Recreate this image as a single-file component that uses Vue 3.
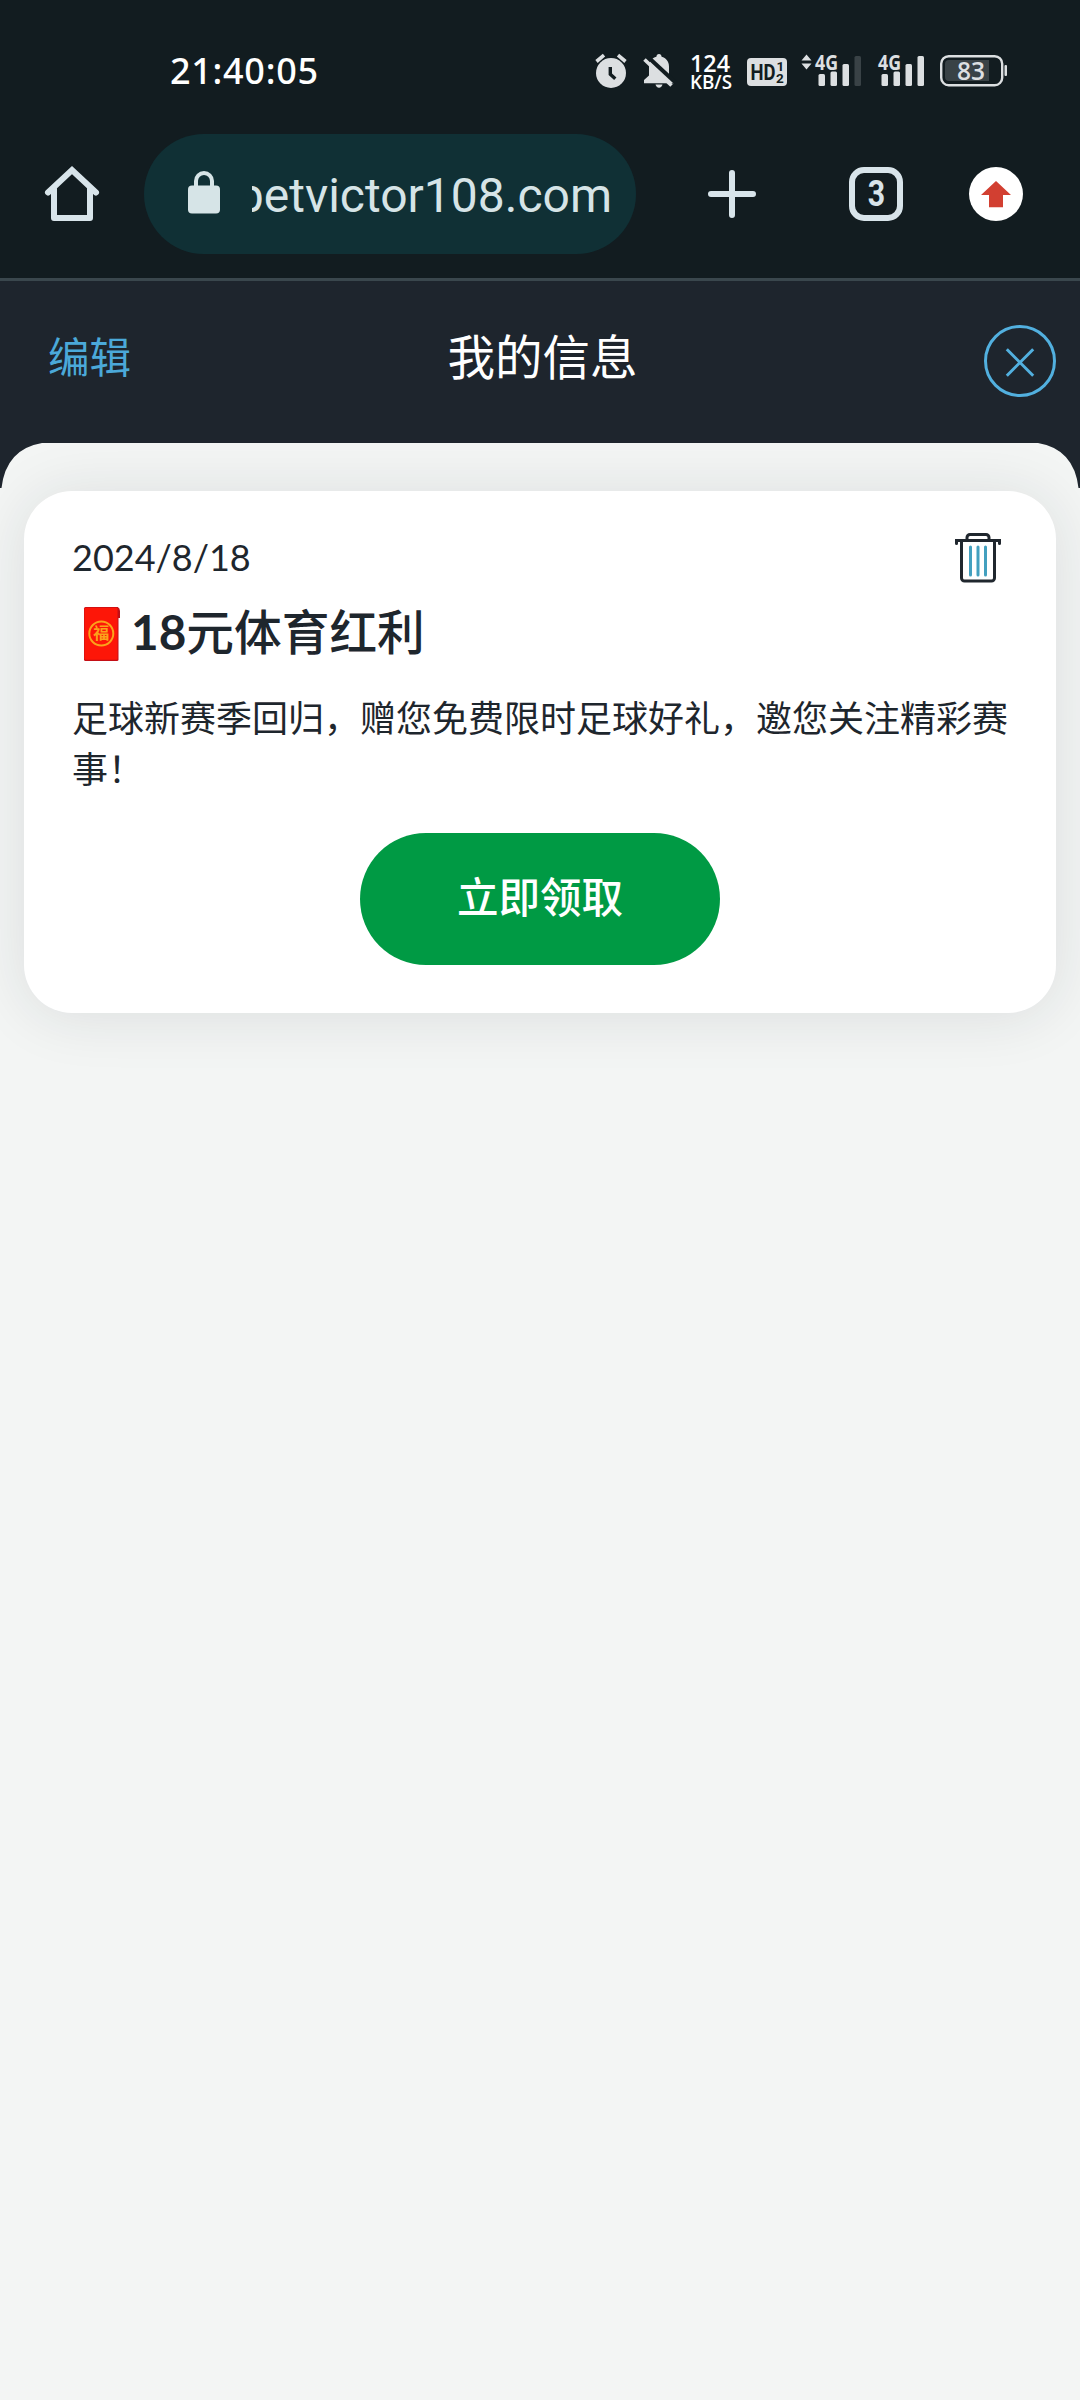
<script setup>
const message = {
  date: '2024/8/18',
  amount: '18',
  title: '元体育红利',
  body: '足球新赛季回归，赠您免费限时足球好礼，邀您关注精彩赛事！',
  action: '立即领取',
}
</script>

<template>
  <div class="screen">
    <div class="statusbar">
      <div class="clock">21:40:05</div>
      <div class="status-icons">
        <svg class="alarm" width="32" height="36" viewBox="0 0 32 36">
          <circle cx="16" cy="20" r="15" fill="#dcdfe1" />
          <path d="M1.500 8.500L9 2.200M30.500 8.500L23 2.200" stroke="#dcdfe1" stroke-width="3.600" />
          <path d="M15.300 14v7.200l5 4.600" fill="none" stroke="#121c20" stroke-width="3.400" />
        </svg>
        <svg class="bell" width="32" height="36" viewBox="0 0 32 36">
          <path d="M16 1c1.500 0 2.600 1.200 2.600 2.800 4.400 1.200 7.400 4.800 7.400 9.600v9l5 5v2.800H1V27l5-4.600v-9c0-4.800 3-8.400 7.400-9.600C13.400 2.200 14.500 1 16 1z" fill="#dcdfe1" />
          <path d="M12.500 31.500h7c-.4 2-1.800 3.200-3.500 3.200s-3.100-1.200-3.500-3.200z" fill="#dcdfe1" />
          <path d="M5.500 4.500L33 30" stroke="#121c20" stroke-width="4" />
          <path d="M1.500 6.500L28.500 32.500" stroke="#dcdfe1" stroke-width="3.600" />
        </svg>
        <svg class="speed" width="44" height="40" viewBox="0 0 44 40" fill="#fff">
          <text x="1" y="19.500" font-size="24" font-weight="600" textLength="40" lengthAdjust="spacingAndGlyphs">124</text>
          <text x="1" y="37" font-size="19.500" font-weight="600" textLength="42" lengthAdjust="spacingAndGlyphs">KB/S</text>
        </svg>
        <svg class="hd" width="40" height="28" viewBox="0 0 40 28">
          <rect width="40" height="28" rx="4" fill="#dcdfe1" />
          <g fill="#121c20" font-weight="700" font-family="Roboto, sans-serif">
            <text x="3.500" y="22" font-size="22" textLength="25" lengthAdjust="spacingAndGlyphs">HD</text>
            <text x="29.500" y="13" font-size="13.500">1</text>
            <text x="29" y="25" font-size="13.500">2</text>
          </g>
        </svg>
        <svg class="signal-one" width="61" height="34" viewBox="0 0 61 34" fill="#dcdfe1">
          <path d="M.5 6.500L5.500.500l5 6zM.5 9.500h10l-5 6z" />
          <text x="14" y="15.500" font-size="20.500" font-weight="700" textLength="23" lengthAdjust="spacingAndGlyphs">4G</text>
          <rect x="17.500" y="20" width="6.500" height="12" rx="1.500" />
          <rect x="29.500" y="17.500" width="6.500" height="14.500" rx="1.500" />
          <rect x="41.500" y="10" width="6.500" height="22" rx="1.500" />
          <rect x="53.500" y="2" width="6.500" height="30" rx="1.500" fill="#394246" />
        </svg>
        <svg class="signal-two" width="48" height="34" viewBox="0 0 48 34" fill="#dcdfe1">
          <text x="0" y="15.500" font-size="20.500" font-weight="700" textLength="23" lengthAdjust="spacingAndGlyphs">4G</text>
          <rect x="3.500" y="20" width="6.500" height="12" rx="1.500" />
          <rect x="15.500" y="17.500" width="6.500" height="14.500" rx="1.500" />
          <rect x="27.500" y="10" width="6.500" height="22" rx="1.500" />
          <rect x="39.500" y="2" width="6.500" height="30" rx="1.500" />
        </svg>
        <svg class="battery" width="68" height="32" viewBox="0 0 68 32">
          <rect x="1.200" y="1.200" width="61" height="29" rx="7.500" fill="none" stroke="#dcdfe1" stroke-width="2.400" />
          <path d="M9 5h40v21H9a4 4 0 0 1-4-4V9a4 4 0 0 1 4-4z" fill="#394246" />
          <rect x="64.500" y="10" width="2.500" height="11" rx="1" fill="#dcdfe1" />
          <text x="17" y="24.500" font-size="25" font-weight="600" fill="#dcdfe1" textLength="28" lengthAdjust="spacingAndGlyphs">83</text>
        </svg>
      </div>
    </div>

    <div class="toolbar">
      <svg class="home" width="56" height="56" viewBox="0 0 56 56" fill="none" stroke="#d8e4ea" stroke-width="6" stroke-linecap="round" stroke-linejoin="round">
        <path d="M4 26.500L28 4l24 22.500" stroke-linejoin="miter" />
        <path d="M10 23v29h36V23" />
      </svg>
      <div class="address">
        <svg class="lock" width="32" height="43" viewBox="0 0 32 43">
          <rect y="14.500" width="32" height="28" rx="4" fill="#d6e4e7" />
          <path d="M8 16V10a8 8 0 0 1 16 0v6" fill="none" stroke="#d6e4e7" stroke-width="4" />
        </svg>
        <div class="url"><span>betvictor108.com</span></div>
      </div>
      <svg class="plus" width="48" height="48" viewBox="0 0 48 48" stroke="#d8e4ea" stroke-width="6" stroke-linecap="round">
        <path d="M24 3v42M3 24h42" />
      </svg>
      <div class="tabs"><span>3</span></div>
      <svg class="update" width="54" height="54" viewBox="0 0 54 54">
        <circle cx="27" cy="27" r="27" fill="#fff" />
        <path d="M27 14l15 14h-8v12.300H20V28h-8z" fill="#d23f31" />
      </svg>
    </div>

    <header class="header">
      <div class="edit">编辑</div>
      <h1>我的信息</h1>
      <svg class="close" width="72" height="72" viewBox="0 0 72 72" fill="none" stroke="#52b0df" stroke-width="3">
        <circle cx="36" cy="36" r="34.500" />
        <path d="M22.800 24.300L49.200 50.700M49.200 24.300L22.800 50.700" />
      </svg>
    </header>

    <main class="content">
      <svg class="corner" width="44" height="46" viewBox="0 0 44 46"><path d="M0 0H42Q6 6 1.500 45H0z" fill="#1e252d" /></svg>
      <svg class="corner right" width="44" height="46" viewBox="0 0 44 46"><path d="M0 0H42Q6 6 1.500 45H0z" fill="#1e252d" /></svg>
      <article class="card">
        <div class="card-top">
          <div class="date">{{ message.date }}</div>
          <svg class="trash" width="46" height="50" viewBox="0 0 46 50" fill="none" stroke="#20272e" stroke-width="3" stroke-linecap="round">
            <path d="M1.500 11.500v-3h43v3" />
            <path d="M12 8V5.500a3 3 0 0 1 3-3h16a3 3 0 0 1 3 3V8" />
            <path d="M6.500 9v37a3 3 0 0 0 3 3h27a3 3 0 0 0 3-3V9" />
            <path d="M15.500 15v28M23 15v28M30.500 15v28" stroke="#43a0bf" />
          </svg>
        </div>
        <h2>
          <svg class="envelope" width="38" height="54" viewBox="0 0 38 54">
            <path d="M31 0h2.500q2.500 1 2.500 4v7h-4z" fill="#bf1016" />
            <rect x="0" y="0" width="34.500" height="54" rx="1.500" fill="#c40f16" />
            <rect x="0.500" y="0.800" width="33" height="52" rx="1" fill="#fd1608" />
            <circle cx="17.300" cy="26.500" r="12" fill="none" stroke="#fba21b" stroke-width="2" />
            <text x="17.300" y="32.300" font-size="16" font-weight="700" text-anchor="middle" fill="#fba21b">福</text>
          </svg>
          <span class="title"><b>{{ message.amount }}</b>{{ message.title }}</span>
        </h2>
        <p>{{ message.body }}</p>
        <button type="button">{{ message.action }}</button>
      </article>
    </main>
  </div>
</template>

<style>
body {
  margin: 0;
  background: #f3f5f4;
}
</style>

<style scoped>
.screen {
  width: 1080px;
  height: 2400px;
  display: flex;
  flex-direction: column;
  overflow: hidden;
  background: #f3f5f4;
  font-family: Lato, "Noto Sans CJK SC", sans-serif;
  color: #1e262d;
}
svg {
  display: block;
  flex: none;
  overflow: visible;
}
.statusbar {
  height: 134px;
  box-sizing: border-box;
  padding: 50px 72px 0 170px;
  display: flex;
  align-items: flex-start;
  justify-content: space-between;
  background: #121c20;
}
.clock {
  padding-top: 1px;
  font: 500 36px/40px "Noto Sans", sans-serif;
  letter-spacing: 0.7px;
  color: #fff;
}
.status-icons {
  display: flex;
  align-items: flex-start;
  font-family: "Open Sans", sans-serif;
}
.alarm { margin: 3px 16px 0 0; }
.bell { margin: 3px 14px 0 0; }
.speed { margin: 2px 14px 0 0; }
.hd { margin: 8px 14px 0 0; }
.signal-one { margin: 4px 16px 0 0; }
.signal-two { margin: 4px 14px 0 0; }
.battery { margin: 5px 0 0 0; }
.toolbar {
  height: 144px;
  display: flex;
  align-items: flex-start;
  background: #121c20;
  border-bottom: 3px solid #3a474d;
}
.home { margin: 32px 44px 0 44px; }
.address {
  width: 492px;
  height: 120px;
  box-sizing: border-box;
  padding: 0 24px 0 44px;
  border-radius: 60px;
  display: flex;
  align-items: center;
  gap: 32px;
  background: #103035;
}
.lock { margin-bottom: 3px; }
.url {
  width: 360px;
  padding-top: 4px;
  overflow: hidden;
  display: flex;
  justify-content: flex-end;
  font: 400 48px/60px Roboto, sans-serif;
  color: #d6e4e7;
}
.plus { margin: 36px 93px 0 72px; }
.tabs {
  width: 54px;
  height: 54px;
  box-sizing: border-box;
  margin: 33px 66px 0 0;
  border: 6px solid #d8e4ea;
  border-radius: 15px;
  display: flex;
  align-items: center;
  justify-content: center;
  font: 700 36px/40px Roboto, sans-serif;
  color: #d8e4ea;
}
.tabs span { transform: scaleX(0.84); }
.update { margin-top: 33px; }
.header {
  height: 162px;
  box-sizing: border-box;
  padding: 0 24px 0 48px;
  display: grid;
  grid-template-columns: 117px 1fr 136px;
  align-items: start;
  background: #1e252d;
}
.edit {
  padding-top: 46px;
  font-size: 41.500px;
  line-height: 60px;
  font-weight: 400;
  color: #4ba9d9;
}
h1 {
  margin: 0;
  padding-top: 44px;
  text-align: center;
  font-size: 47.500px;
  line-height: 64px;
  font-weight: 400;
  color: #fff;
}
.close {
  margin-top: 44px;
  justify-self: end;
}
.content {
  flex: 1;
  position: relative;
  overflow: hidden;
  padding: 48px 24px 0;
}
.corner {
  position: absolute;
  top: 0;
  left: 0;
  z-index: 1;
}
.corner.right {
  left: auto;
  right: 0;
  transform: scaleX(-1);
}
.card {
  height: 522px;
  box-sizing: border-box;
  padding: 40px 48px 48px;
  border-radius: 48px;
  background: #fff;
  box-shadow: 0 3px 60px rgba(30, 37, 45, 0.11);
  display: flex;
  flex-direction: column;
}
.card-top {
  height: 60px;
  padding-right: 7px;
  display: flex;
  justify-content: space-between;
  align-items: flex-start;
}
.date {
  padding-top: 4px;
  font-size: 36px;
  line-height: 44px;
}
.trash { margin-top: 1px; }
h2 {
  height: 72px;
  margin: 0;
  padding-left: 12px;
  display: flex;
  align-items: center;
  gap: 9px;
  font-size: 47.700px;
  line-height: 72px;
  font-weight: 500;
}
.envelope {
  margin-top: 14px;
}
.title {
  padding-top: 10px;
  white-space: nowrap;
}
.title b {
  font-weight: 700;
}
p {
  height: 102px;
  margin: 30px 0 0;
  font-size: 36px;
  line-height: 51px;
  font-weight: 400;
}
button {
  width: 360px;
  height: 132px;
  margin: 38px auto 0;
  padding: 0 0 5px;
  border: 0;
  border-radius: 66px;
  background: #009a44;
  color: #fff;
  font-family: inherit;
  font-size: 41.500px;
  font-weight: 500;
  line-height: 60px;
}
</style>
